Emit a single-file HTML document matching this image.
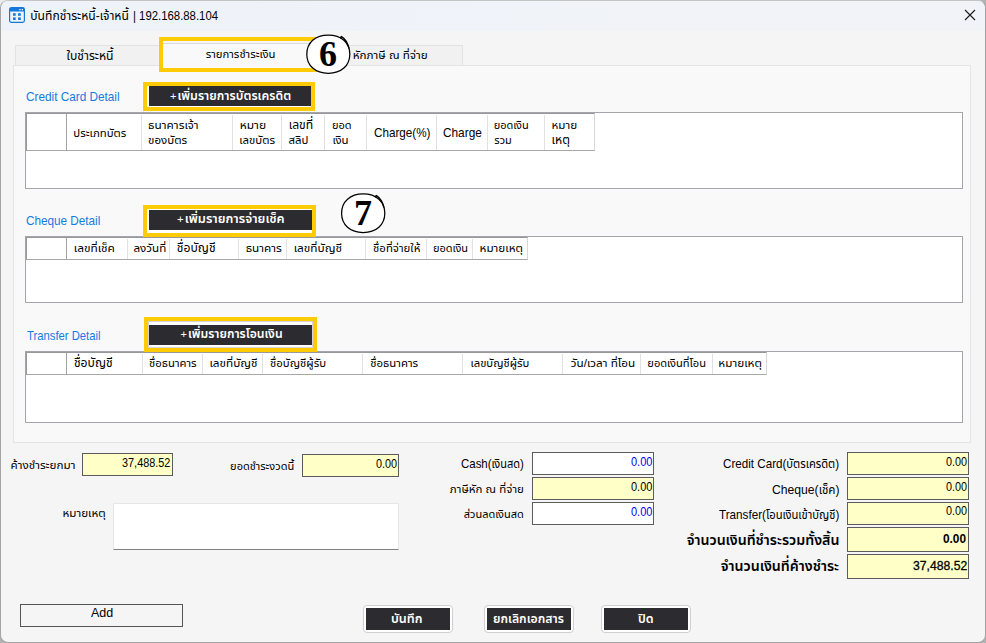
<!DOCTYPE html>
<html lang="th">
<head>
<meta charset="utf-8">
<title>บันทึกชำระหนี้-เจ้าหนี้</title>
<style>
*{box-sizing:border-box;margin:0;padding:0}
html,body{width:986px;height:643px;overflow:hidden;background:#b2b2b2}
body{font-family:"Liberation Sans","Noto Sans Thai UI","Noto Sans Thai","Loma","Leelawadee UI","Tahoma",sans-serif;font-size:12px;color:#000;position:relative}
.win{position:absolute;left:0;top:0;width:986px;height:643px;background:#f5f5f5;border:1px solid #a4a4a4;border-top-color:#c4c4c4;border-radius:8px;overflow:hidden}
.in{position:absolute;left:-1px;top:-1px;width:986px;height:643px}
.a{position:absolute}
.t{position:absolute;white-space:nowrap;line-height:20px;transform-origin:0 0}
.tab{position:absolute;background:#f1f1f1;border:1px solid #e2e2e2;border-bottom:none}
.grid{position:absolute;background:#fff;border:1px solid #a4a4aa}
.hd{position:absolute;left:0;top:0;border-top:1px solid #98989c;border-left:1px solid #98989c;border-bottom:1px solid #a8a8a8;border-right:1px solid #d8d8d8;background:#fff}
.hs{position:absolute;top:1px;bottom:0;width:1px;background:#e1e1e1}
.hs.d{top:0;background:#a2a2a6}
.f{position:absolute;border:1px solid #5c5c5c;background:#ffffc8}
.w{background:#fff}
.dk{position:absolute;background:#2c2b30}
.btn{position:absolute;background:#fff;border:1px solid #cfcfcf;border-radius:4px}
</style>
</head>
<body>
<div class="a" style="left:0;top:0;width:10px;height:10px;background:#ececec"></div>
<div class="win"><div class="in">
<div class="a" style="left:0px;top:0px;width:986px;height:31px;background:linear-gradient(90deg,#eef3f9,#f2f3f8)"></div>
<svg class="a" style="left:9px;top:7px" width="16" height="16" viewBox="0 0 16 16"><rect x="0.6" y="0.6" width="14.8" height="14.8" rx="1.8" fill="#eef3f8" stroke="#1479dc" stroke-width="1.2"/><path d="M0.6 4.6V2.4a1.8 1.8 0 0 1 1.8-1.8h11.2a1.8 1.8 0 0 1 1.8 1.8v2.2z" fill="#1479dc"/><rect x="10.3" y="2" width="1.3" height="1.3" fill="#fff"/><rect x="12.7" y="2" width="1.3" height="1.3" fill="#fff"/><rect x="4" y="6.2" width="2.7" height="2.6" fill="#1479dc"/><rect x="9.1" y="6.2" width="2.7" height="2.6" fill="#1479dc"/><rect x="4" y="10.4" width="2.7" height="2.6" fill="#1479dc"/><rect x="9.1" y="10.4" width="2.7" height="2.6" fill="#1479dc"/></svg>
<svg class="a" style="left:964px;top:9px" width="12" height="12" viewBox="0 0 12 12"><path d="M1 1 L11 11 M11 1 L1 11" stroke="#1a1a1a" stroke-width="1.1" fill="none"/></svg>
<div class="tab" style="left:15px;top:45px;width:147px;height:21px"></div>
<div class="tab" style="left:333px;top:45px;width:130px;height:21px"></div>
<div class="a" style="left:13px;top:65px;width:958px;height:378px;background:#f9f9f9;border:1px solid #e4e4e4"></div>
<div class="tab" style="left:161px;top:43px;width:173px;height:24px;background:#f9f9f9;border-color:#dadada"></div>
<div class="a" style="left:159px;top:37px;width:173px;height:35px;border:4px solid #ffcb05;border-right:none"></div>
<div class="a" style="left:143px;top:82px;width:172px;height:29px;border:4px solid #ffcb05;background:#fff"></div>
<div class="a" style="left:149px;top:86px;width:162px;height:20px;background:#2c2b30"></div>
<div class="grid" style="left:25px;top:112px;width:938px;height:77px"><div class="hd" style="width:569px;height:38px"><i class="hs d" style="left:39px"></i><i class="hs" style="left:114px"></i><i class="hs" style="left:205px"></i><i class="hs" style="left:254px"></i><i class="hs" style="left:297px"></i><i class="hs" style="left:339px"></i><i class="hs" style="left:409px"></i><i class="hs" style="left:460px"></i><i class="hs" style="left:517px"></i></div></div>
<div class="grid" style="left:25px;top:236px;width:938px;height:67px"><div class="hd" style="width:502px;height:23px"><i class="hs d" style="left:39px"></i><i class="hs" style="left:100px"></i><i class="hs" style="left:142px"></i><i class="hs" style="left:211px"></i><i class="hs" style="left:259px"></i><i class="hs" style="left:338px"></i><i class="hs" style="left:399px"></i><i class="hs" style="left:445px"></i></div></div>
<div class="grid" style="left:25px;top:351px;width:938px;height:72px"><div class="hd" style="width:741px;height:23px"><i class="hs d" style="left:39px"></i><i class="hs" style="left:115px"></i><i class="hs" style="left:175px"></i><i class="hs" style="left:235px"></i><i class="hs" style="left:335px"></i><i class="hs" style="left:435px"></i><i class="hs" style="left:535px"></i><i class="hs" style="left:613px"></i><i class="hs" style="left:685px"></i></div></div>
<div class="a" style="left:143px;top:205px;width:173px;height:32px;border:4px solid #ffcb05;background:#fff"></div>
<div class="a" style="left:149px;top:210px;width:163px;height:20px;background:#2c2b30"></div>
<div class="a" style="left:144px;top:317px;width:173px;height:35px;border:4px solid #ffcb05;background:#fff"></div>
<div class="a" style="left:148px;top:321px;width:165px;height:27px;border:1px solid #d4d4d8;background:#fff"></div>
<div class="a" style="left:149px;top:325px;width:163px;height:20px;background:#2c2b30"></div>
<svg class="a" style="left:298px;top:27px" width="60" height="54" viewBox="298 27 60 54"><path d="M328.3 35.1 C341.2 35.1 349.8 42.7 349.8 54.2 C349.8 65.7 341.2 73.30000000000001 328.3 73.30000000000001 C315.4 73.30000000000001 306.8 65.7 306.8 54.2 C306.8 42.7 315.4 35.1 328.3 35.1Z" fill="#fff" stroke="#000" stroke-width="1.25"/><path d="M339.9 38.1 L341.5 36.6 C344.5 38.4 347.5 42.6 349.1 48.6" fill="none" stroke="#000" stroke-width="1.5" stroke-linejoin="miter"/><text x="328" y="65.6" font-family="'Liberation Serif',serif" font-weight="700" font-size="36" text-anchor="middle" fill="#000">6</text></svg>
<svg class="a" style="left:333px;top:186px" width="60" height="54" viewBox="333 186 60 54"><path d="M363.2 193.89999999999998 C376.2 193.89999999999998 384.8 201.6 384.8 213.2 C384.8 224.8 376.2 232.5 363.2 232.5 C350.2 232.5 341.59999999999997 224.8 341.59999999999997 213.2 C341.59999999999997 201.6 350.2 193.89999999999998 363.2 193.89999999999998Z" fill="#fff" stroke="#000" stroke-width="1.25"/><path d="M374.8 197.1 L376.4 195.6 C379.4 197.4 382.4 201.6 384.0 207.6" fill="none" stroke="#000" stroke-width="1.5" stroke-linejoin="miter"/><text x="363" y="224.6" font-family="'Liberation Serif',serif" font-weight="700" font-size="36" text-anchor="middle" fill="#000">7</text></svg>
<div class="f" style="left:82px;top:453px;width:91px;height:23px"></div>
<div class="f" style="left:302px;top:454px;width:97px;height:23px"></div>
<div class="f w" style="left:532px;top:452px;width:122px;height:23px"></div>
<div class="f" style="left:532px;top:477px;width:122px;height:23px"></div>
<div class="f w" style="left:532px;top:502px;width:122px;height:23px"></div>
<div class="f" style="left:847px;top:452px;width:122px;height:23px"></div>
<div class="f" style="left:847px;top:477px;width:122px;height:23px"></div>
<div class="f" style="left:847px;top:502px;width:122px;height:23px"></div>
<div class="f" style="left:847px;top:527px;width:122px;height:25px"></div>
<div class="f" style="left:847px;top:554px;width:122px;height:25px"></div>
<div class="a" style="left:113px;top:503px;width:286px;height:47px;background:#fff;border:1px solid #e6e6e6;border-bottom-color:#808080"></div>
<div class="a" style="left:20px;top:604px;width:163px;height:23px;border:1px solid #555;background:#f5f5f5"></div>
<div class="btn" style="left:363px;top:605px;width:90px;height:28px"></div>
<div class="a" style="left:366px;top:608px;width:84px;height:22px;background:#2c2b30"></div>
<div class="btn" style="left:484px;top:605px;width:90px;height:28px"></div>
<div class="a" style="left:487px;top:608px;width:84px;height:22px;background:#2c2b30"></div>
<div class="btn" style="left:601px;top:605px;width:90px;height:28px"></div>
<div class="a" style="left:604px;top:608px;width:84px;height:22px;background:#2c2b30"></div>
<span class="t" style="left:30.3px;top:6px;font-size:12.1px;">บันทึกชำระหนี้-เจ้าหนี้</span>
<span class="t" style="left:132.7px;top:6px;font-size:12px;transform:scaleX(0.946);">| 192.168.88.104</span>
<span class="t" style="left:66.5px;top:45.8px;font-size:12.2px;">ใบชำระหนี้</span>
<span class="t" style="left:205.7px;top:44px;font-size:11.31px;">รายการชำระเงิน</span>
<span class="t" style="left:352.7px;top:45.4px;font-size:11.65px;">หักภาษี ณ ที่จ่าย</span>
<span class="t" style="left:25.5px;top:87px;font-size:13px;color:#167ae2;transform:scaleX(0.906);">Credit Card Detail</span>
<span class="t" style="left:25.5px;top:211px;font-size:13px;color:#167ae2;transform:scaleX(0.901);">Cheque Detail</span>
<span class="t" style="left:26.5px;top:326px;font-size:13px;color:#167ae2;transform:scaleX(0.867);">Transfer Detail</span>
<span class="t" style="left:170.3px;top:86px;font-size:12.2px;color:#fff;font-weight:600;transform:scaleX(1.009);"><span style="position:relative;top:0;font-size:11px;font-weight:400;margin-right:1px">+</span>เพิ่มรายการบัตรเครดิต</span>
<span class="t" style="left:177.4px;top:209px;font-size:12.2px;color:#fff;font-weight:600;transform:scaleX(1.046);"><span style="position:relative;top:0;font-size:11px;font-weight:400;margin-right:1px">+</span>เพิ่มรายการจ่ายเช็ค</span>
<span class="t" style="left:180.5px;top:324px;font-size:12.2px;color:#fff;font-weight:600;"><span style="position:relative;top:0;font-size:11px;font-weight:400;margin-right:1px">+</span>เพิ่มรายการโอนเงิน</span>
<span class="t" style="left:73.3px;top:122.8px;font-size:11.37px;">ประเภทบัตร</span>
<span class="t" style="left:148.1px;top:114.7px;font-size:11.84px;">ธนาคารเจ้า</span>
<span class="t" style="left:148.1px;top:129.5px;font-size:11.55px;">ของบัตร</span>
<span class="t" style="left:239.7px;top:114.7px;font-size:12.01px;">หมาย</span>
<span class="t" style="left:239.3px;top:129.5px;font-size:11.41px;">เลขบัตร</span>
<span class="t" style="left:288.7px;top:114.7px;font-size:12.2px;">เลขที่</span>
<span class="t" style="left:288.4px;top:129.5px;font-size:11.42px;">สลิป</span>
<span class="t" style="left:331.9px;top:114.7px;font-size:11.0px;">ยอด</span>
<span class="t" style="left:332.5px;top:129.5px;font-size:11.44px;">เงิน</span>
<span class="t" style="left:374.0px;top:122.8px;font-size:13px;transform:scaleX(0.898);">Charge(%)</span>
<span class="t" style="left:443.1px;top:122.8px;font-size:13px;transform:scaleX(0.91);">Charge</span>
<span class="t" style="left:493.7px;top:114.7px;font-size:11.0px;">ยอดเงิน</span>
<span class="t" style="left:494.3px;top:129.5px;font-size:11.0px;">รวม</span>
<span class="t" style="left:551.5px;top:114.7px;font-size:11.69px;">หมาย</span>
<span class="t" style="left:551.4px;top:129.5px;font-size:12.2px;">เหตุ</span>
<span class="t" style="left:73.8px;top:238.4px;font-size:11.89px;">เลขที่เช็ค</span>
<span class="t" style="left:133.5px;top:238.4px;font-size:11.6px;">ลงวันที่</span>
<span class="t" style="left:176.8px;top:238.4px;font-size:12.2px;">ชื่อบัญชี</span>
<span class="t" style="left:245.7px;top:238.4px;font-size:11.79px;">ธนาคาร</span>
<span class="t" style="left:293.7px;top:238.4px;font-size:11.88px;">เลขที่บัญชี</span>
<span class="t" style="left:373.1px;top:238.4px;font-size:11.42px;">ชื่อที่จ่ายให้</span>
<span class="t" style="left:433.0px;top:238.4px;font-size:11.0px;">ยอดเงิน</span>
<span class="t" style="left:479.6px;top:238.4px;font-size:11.66px;">หมายเหตุ</span>
<span class="t" style="left:73.9px;top:353.4px;font-size:12.2px;">ชื่อบัญชี</span>
<span class="t" style="left:149.1px;top:353.4px;font-size:11.34px;">ชื่อธนาคาร</span>
<span class="t" style="left:209.5px;top:353.4px;font-size:11.79px;">เลขที่บัญชี</span>
<span class="t" style="left:270.1px;top:353.4px;font-size:11.37px;">ชื่อบัญชีผู้รับ</span>
<span class="t" style="left:370.3px;top:353.4px;font-size:11.42px;">ชื่อธนาคาร</span>
<span class="t" style="left:470.5px;top:353.4px;font-size:11.3px;">เลขบัญชีผู้รับ</span>
<span class="t" style="left:570.8px;top:353.4px;font-size:11.69px;">วัน/เวลา ที่โอน</span>
<span class="t" style="left:647.3px;top:353.4px;font-size:11.11px;">ยอดเงินที่โอน</span>
<span class="t" style="left:718.3px;top:353.4px;font-size:11.75px;">หมายเหตุ</span>
<span class="t" style="left:10.6px;top:454.5px;font-size:11.68px;">ค้างชำระยกมา</span>
<span class="t" style="left:230.1px;top:455.5px;font-size:11.0px;">ยอดชำระงวดนี้</span>
<span class="t" style="left:62.4px;top:503px;font-size:11.68px;">หมายเหตุ</span>
<span class="t" style="left:460.6px;top:453.9px;font-size:13px;transform:scaleX(0.881);">Cash(<span style="font-size:12.5px">เงินสด</span>)</span>
<span class="t" style="left:449.8px;top:478.7px;font-size:11.5px;">ภาษีหัก ณ ที่จ่าย</span>
<span class="t" style="left:463.8px;top:503.5px;font-size:11.0px;">ส่วนลดเงินสด</span>
<span class="t" style="left:722.9px;top:454.2px;font-size:13px;transform:scaleX(0.895);">Credit Card(<span style="font-size:12.5px">บัตรเครดิต</span>)</span>
<span class="t" style="left:771.9px;top:479.7px;font-size:13px;transform:scaleX(0.935);">Cheque(<span style="font-size:12.5px">เช็ค</span>)</span>
<span class="t" style="left:719.1px;top:504.5px;font-size:13px;transform:scaleX(0.898);">Transfer(<span style="font-size:12.5px">โอนเงินเข้าบัญชี</span>)</span>
<span class="t" style="left:686.7px;top:529.9px;font-size:14.18px;font-weight:640;">จำนวนเงินที่ชำระรวมทั้งสิ้น</span>
<span class="t" style="left:720.8px;top:556.2px;font-size:14.19px;font-weight:640;">จำนวนเงินที่ค้างชำระ</span>
<span class="t" style="left:122.0px;top:453.1px;font-size:13px;transform:scaleX(0.837);">37,488.52</span>
<span class="t" style="left:375.7px;top:453.7px;font-size:13px;transform:scaleX(0.833);">0.00</span>
<span class="t" style="left:630.7px;top:451.9px;font-size:13px;color:#0000f0;transform:scaleX(0.847);">0.00</span>
<span class="t" style="left:630.7px;top:476.7px;font-size:13px;transform:scaleX(0.847);">0.00</span>
<span class="t" style="left:630.7px;top:501.8px;font-size:13px;color:#0000f0;transform:scaleX(0.847);">0.00</span>
<span class="t" style="left:945.7px;top:451.7px;font-size:13px;transform:scaleX(0.833);">0.00</span>
<span class="t" style="left:945.7px;top:476.5px;font-size:13px;transform:scaleX(0.833);">0.00</span>
<span class="t" style="left:945.7px;top:501.4px;font-size:13px;transform:scaleX(0.833);">0.00</span>
<span class="t" style="left:943.1px;top:528.8px;font-size:13px;font-weight:640;transform:scaleX(0.91);">0.00</span>
<span class="t" style="left:912.5px;top:555.9px;font-size:13px;-webkit-text-stroke:0.3px #000;transform:scaleX(0.937);">37,488.52</span>
<span class="t" style="left:90.7px;top:602.8px;font-size:13px;transform:scaleX(0.959);">Add</span>
<span class="t" style="left:391.4px;top:608.7px;font-size:12.2px;color:#fff;font-weight:600;transform:scaleX(1.034);">บันทึก</span>
<span class="t" style="left:492.9px;top:608.7px;font-size:12.2px;color:#fff;font-weight:600;transform:scaleX(1.005);">ยกเลิกเอกสาร</span>
<span class="t" style="left:638.1px;top:608.7px;font-size:12.2px;color:#fff;font-weight:600;transform:scaleX(1.026);">ปิด</span>
</div></div>
</body>
</html>
